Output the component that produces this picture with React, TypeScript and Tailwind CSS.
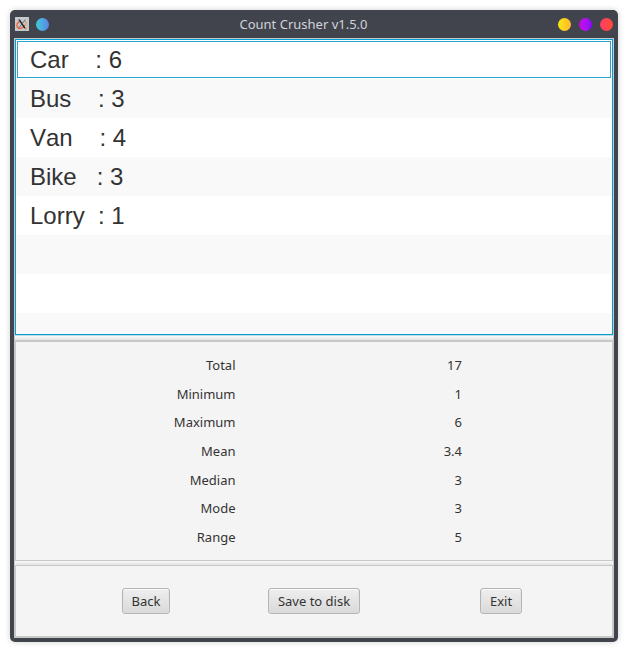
const counts = [
  { text: 'Car    : 6', focused: true },
  { text: 'Bus    : 3' },
  { text: 'Van    : 4' },
  { text: 'Bike   : 3' },
  { text: 'Lorry  : 1' },
  { text: '' },
  { text: '' },
  { text: '' },
];

const stats = [
  ['Total', '17'],
  ['Minimum', '1'],
  ['Maximum', '6'],
  ['Mean', '3.4'],
  ['Median', '3'],
  ['Mode', '3'],
  ['Range', '5'],
];

function TitleBar() {
  return (
    <header className="flex h-7 items-center bg-[#41444d] px-px">
      <div className="flex items-center gap-[7px]">
        <svg width="14" height="14" viewBox="0 0 14 14" aria-hidden="true">
          <rect width="14" height="14" rx="0.5" fill="#c6c9cc" />
          <path d="M5.600 4.200C2.200 4.800 1 8.500 2.600 10.600c1.700 1.900 5.400.6 7.400-2.400" fill="none" stroke="#ee6a42" strokeWidth="1.500" />
          <path d="M9.500 4c1.900.3 2 2.600.8 4.400M9 11.600h3" fill="none" stroke="#e09a6c" strokeWidth="1.200" />
          <path d="M3.200 2.500h1.800l5.800 8.700H9z" fill="#25282e" />
          <path d="M10.400 2.500 3.600 11.200" stroke="#3c4046" strokeWidth="0.700" />
        </svg>
        <button
          type="button"
          aria-label="Window menu"
          className="size-[13px] rounded-full bg-linear-to-r from-[#36cbd5] to-[#5c82e8]"
        />
      </div>
      <h1 className="flex-1 text-center text-[13px] leading-[18px] text-[#d0d3da]">Count Crusher v1.5.0</h1>
      <div className="flex items-center gap-2">
        <button type="button" aria-label="Minimize" className="size-[13px] rounded-full bg-linear-to-r from-[#f8e80c] to-[#ffb52b]" />
        <button type="button" aria-label="Maximize" className="size-[13px] rounded-full bg-linear-to-r from-[#cc00e0] to-[#8a00ff]" />
        <button type="button" aria-label="Close" className="size-[13px] rounded-full bg-linear-to-r from-[#ff3c68] to-[#ff4b2b]" />
      </div>
    </header>
  );
}

function CountList() {
  return (
    <ul className="h-[296px] overflow-hidden border border-[#039ed3] font-['Liberation_Sans',Arial,sans-serif] text-2xl text-[#333333] [font-kerning:none]">
      {counts.map((row, i) => (
        <li key={i} className="h-[39px] p-px odd:bg-white even:bg-[#f9f9f9]">
          <div
            className={
              row.focused
                ? 'h-[37px] border border-[#2ba5cf] px-3 leading-[35px] whitespace-pre'
                : 'h-[37px] border border-transparent px-3 leading-[35px] whitespace-pre'
            }
          >
            {row.text}
          </div>
        </li>
      ))}
    </ul>
  );
}

function ActionButton({ label }: { label: string }) {
  return (
    <button
      type="button"
      className="h-[26px] rounded-[3px] border border-[#b5b5b5] bg-linear-to-b from-[#efefef] to-[#d9d9d9] px-[9px] text-[13px] leading-[18px] text-[#333333] shadow-[inset_0_1px_0_#fafafa,inset_1px_0_0_#e2e2e2,inset_-1px_0_0_#e2e2e2]"
    >
      {label}
    </button>
  );
}

export default function App() {
  return (
    <div className="flex min-h-screen flex-col bg-white p-2.5 font-['Noto_Sans',sans-serif]">
      <main className="flex flex-1 flex-col overflow-hidden rounded-[5px] bg-[#41444d] px-1 pb-1 shadow-[0_0_6px_rgba(0,0,0,0.18)]">
        <TitleBar />
        <div className="flex flex-1 flex-col border border-[#c8c8c8] bg-[#f4f4f4]">
          <CountList />
          <div className="h-[5px] border-t border-[#c3dbe3] bg-linear-to-b from-[#fbfbfb] to-[#e2e2e2]" />
          <section className="border border-t-2 border-[#c8c8c8] pt-[9px] pb-[9px]">
            <table className="h-[200px] w-full table-fixed text-[13px] leading-[18px] text-[#333333]">
              <colgroup>
                <col className="w-[37%]" />
                <col className="w-[38%]" />
                <col />
              </colgroup>
              <tbody>
                {stats.map(([name, value]) => (
                  <tr key={name}>
                    <th scope="row" className="p-0 pr-px text-right font-normal">{name}</th>
                    <td className="p-0 pr-px text-right">{value}</td>
                    <td className="p-0" />
                  </tr>
                ))}
              </tbody>
            </table>
          </section>
          <div className="mx-px h-1 bg-linear-to-b from-[#fbfbfb] to-[#e2e2e2]" />
          <footer className="grid flex-1 grid-cols-[172fr_164fr_210fr] place-items-center border border-[#c8c8c8] pr-1.5 pl-11">
            <ActionButton label="Back" />
            <ActionButton label="Save to disk" />
            <ActionButton label="Exit" />
          </footer>
        </div>
      </main>
    </div>
  );
}
